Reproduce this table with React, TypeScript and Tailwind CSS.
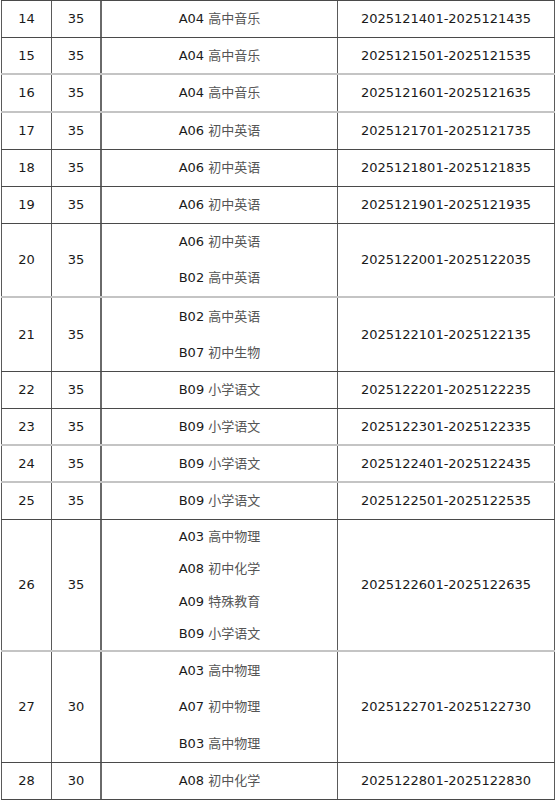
import React from "react";

type Row = { n: string; c: string; items: string[]; range: string; h: number; light: boolean };

const rows: Row[] = [
  { n: "14", c: "35", items: ["A04 高中音乐"], range: "2025121401-2025121435", h: 37, light: false },
  { n: "15", c: "35", items: ["A04 高中音乐"], range: "2025121501-2025121535", h: 37, light: true },
  { n: "16", c: "35", items: ["A04 高中音乐"], range: "2025121601-2025121635", h: 38, light: true },
  { n: "17", c: "35", items: ["A06 初中英语"], range: "2025121701-2025121735", h: 37, light: false },
  { n: "18", c: "35", items: ["A06 初中英语"], range: "2025121801-2025121835", h: 37, light: false },
  { n: "19", c: "35", items: ["A06 初中英语"], range: "2025121901-2025121935", h: 37, light: false },
  { n: "20", c: "35", items: ["A06 初中英语", "B02 高中英语"], range: "2025122001-2025122035", h: 74, light: true },
  { n: "21", c: "35", items: ["B02 高中英语", "B07 初中生物"], range: "2025122101-2025122135", h: 74, light: false },
  { n: "22", c: "35", items: ["B09 小学语文"], range: "2025122201-2025122235", h: 37, light: false },
  { n: "23", c: "35", items: ["B09 小学语文"], range: "2025122301-2025122335", h: 37, light: true },
  { n: "24", c: "35", items: ["B09 小学语文"], range: "2025122401-2025122435", h: 37, light: true },
  { n: "25", c: "35", items: ["B09 小学语文"], range: "2025122501-2025122535", h: 37, light: false },
  { n: "26", c: "35", items: ["A03 高中物理", "A08 初中化学", "A09 特殊教育", "B09 小学语文"], range: "2025122601-2025122635", h: 132, light: true },
  { n: "27", c: "30", items: ["A03 高中物理", "A07 初中物理", "B03 高中物理"], range: "2025122701-2025122730", h: 111, light: false },
  { n: "28", c: "30", items: ["A08 初中化学"], range: "2025122801-2025122830", h: 37, light: false },
];

function Item({ text }: { text: string }) {
  const [code, ...rest] = text.split(" ");
  return (
    <span>
      <span className="text-[#1a1a1a]">{code}</span>{" "}
      <span className="text-[#555555]">{rest.join(" ")}</span>
    </span>
  );
}

export default function App() {
  return (
    <div
      className="w-[558px] h-[801px] bg-white text-[13px] text-[#1a1a1a]"
      style={{ fontFamily: '"DejaVu Sans", "Noto Sans CJK SC", sans-serif' }}
    >
      <div className="ml-[1px] w-[554px] border-t border-[#4a4a4a]">
        {rows.map((r) => (
          <div
            key={r.n}
            className={
              "flex " +
              (r.light ? "border-b-2 border-[#c4c4c4]" : "border-b border-[#4a4a4a]")
            }
            style={{ height: r.h }}
          >
            <div className="w-[51px] border-l border-r border-[#5a5a5a] flex items-center justify-center">
              {r.n}
            </div>
            <div className="w-[50px] border-r-2 border-[#6a6a6a] flex items-center justify-center">
              {r.c}
            </div>
            <div className="w-[236px] border-r border-[#5a5a5a] flex flex-col">
              {r.items.map((it, i) => (
                <div key={i} className="flex-1 flex items-center justify-center">
                  <Item text={it} />
                </div>
              ))}
            </div>
            <div className="w-[217px] border-r border-[#5a5a5a] flex items-center justify-center">
              {r.range}
            </div>
          </div>
        ))}
      </div>
    </div>
  );
}
